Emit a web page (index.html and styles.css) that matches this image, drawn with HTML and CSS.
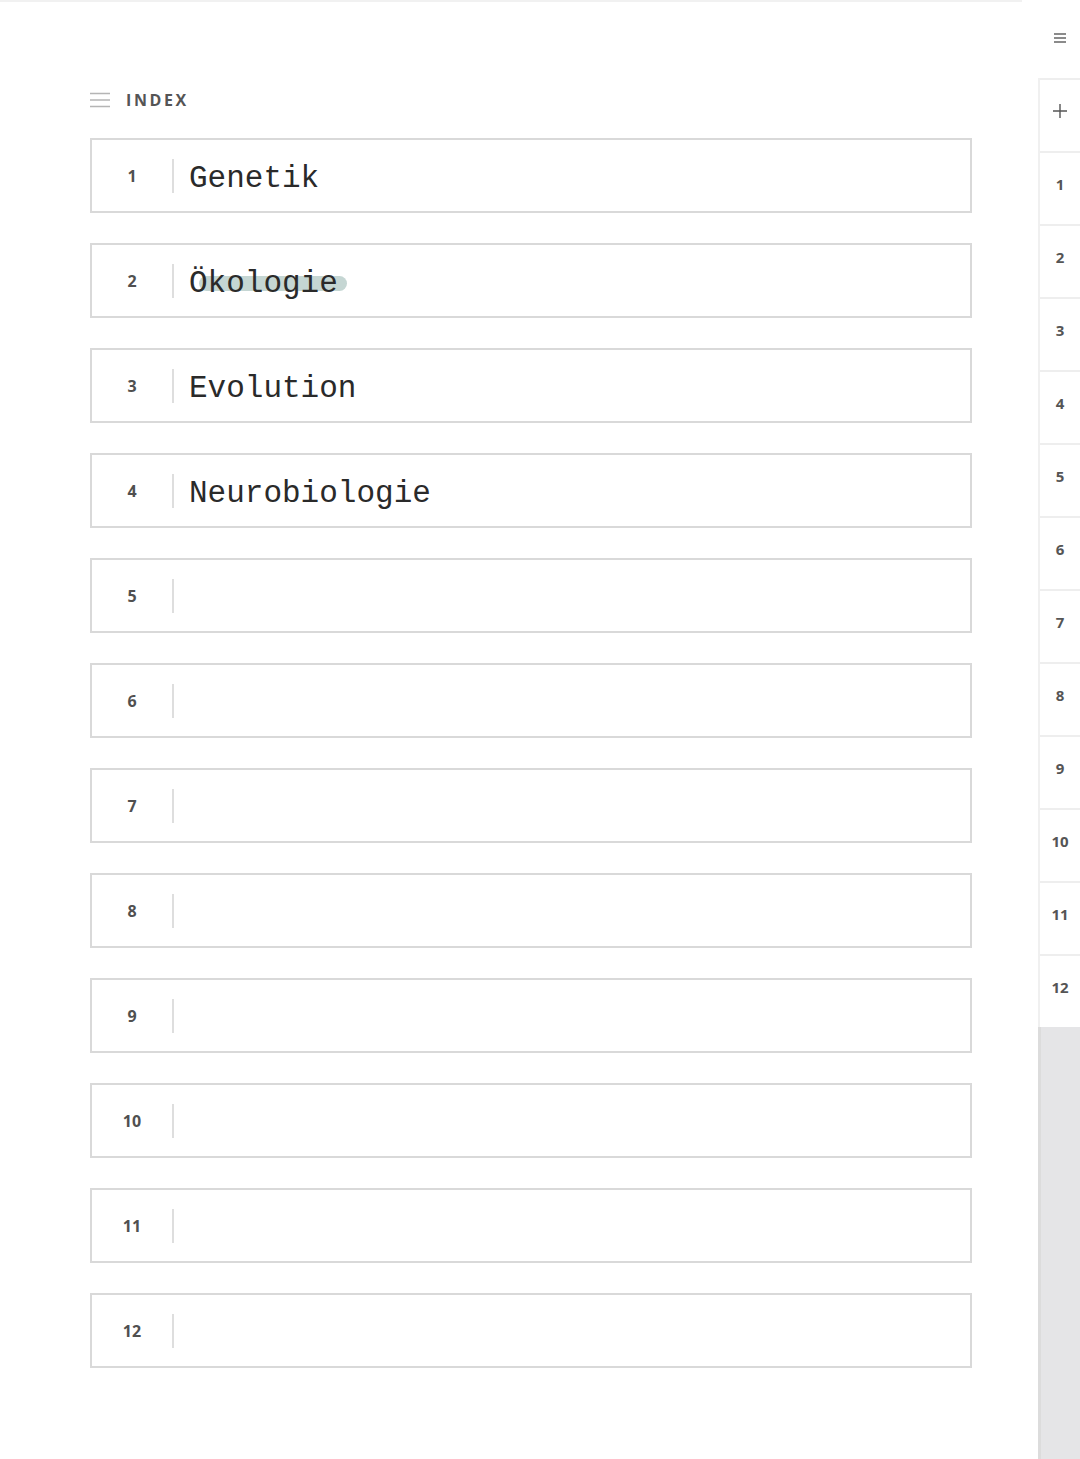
FILE: index.html
```html
<!DOCTYPE html>
<html lang="de">
<head>
<meta charset="utf-8">
<title>Index</title>
<link rel="stylesheet" href="styles.css">
</head>
<body>
<div class="page">
  <main class="main">
    <div class="topline"></div>
    <div class="header">
      <svg class="menu-icon" width="20" height="16" viewBox="0 0 20 16"><path d="M0 1.5h20M0 8h20M0 14.5h20" stroke="#b5b5b5" stroke-width="1.6" fill="none"/></svg>
      <span class="title">INDEX</span>
    </div>
    <ol class="list">
      <li class="row"><span class="num">1</span><span class="sep"></span><span class="text">Genetik</span></li>
      <li class="row"><span class="num">2</span><span class="sep"></span><span class="text"><span class="mark">Ökologie</span></span></li>
      <li class="row"><span class="num">3</span><span class="sep"></span><span class="text">Evolution</span></li>
      <li class="row"><span class="num">4</span><span class="sep"></span><span class="text">Neurobiologie</span></li>
      <li class="row"><span class="num">5</span><span class="sep"></span><span class="text"></span></li>
      <li class="row"><span class="num">6</span><span class="sep"></span><span class="text"></span></li>
      <li class="row"><span class="num">7</span><span class="sep"></span><span class="text"></span></li>
      <li class="row"><span class="num">8</span><span class="sep"></span><span class="text"></span></li>
      <li class="row"><span class="num">9</span><span class="sep"></span><span class="text"></span></li>
      <li class="row"><span class="num">10</span><span class="sep"></span><span class="text"></span></li>
      <li class="row"><span class="num">11</span><span class="sep"></span><span class="text"></span></li>
      <li class="row"><span class="num">12</span><span class="sep"></span><span class="text"></span></li>
    </ol>
  </main>
  <aside class="sidebar">
    <div class="side-menu">
      <svg width="12" height="10" viewBox="0 0 12 10"><path d="M0 1h12M0 5h12M0 9h12" stroke="#666" stroke-width="1.4" fill="none"/></svg>
    </div>
    <div class="tabs">
      <div class="tab plus"><svg width="14" height="14" viewBox="0 0 14 14"><path d="M7 0v14M0 7h14" stroke="#555" stroke-width="1.4" fill="none"/></svg></div>
      <div class="tab">1</div>
      <div class="tab">2</div>
      <div class="tab">3</div>
      <div class="tab">4</div>
      <div class="tab">5</div>
      <div class="tab">6</div>
      <div class="tab">7</div>
      <div class="tab">8</div>
      <div class="tab">9</div>
      <div class="tab">10</div>
      <div class="tab">11</div>
      <div class="tab">12</div>
    </div>
    <div class="side-rest"></div>
  </aside>
</div>
</body>
</html>
```

FILE: styles.css
```css
* { box-sizing: border-box; }
html, body { margin: 0; padding: 0; background: #fff; }
body { font-family: "Open Sans", "Noto Sans", sans-serif; }

.page {
  display: flex;
  width: 1080px;
  height: 1459px;
  overflow: hidden;
}

.main {
  flex: 1;
  display: flex;
  flex-direction: column;
}

.topline {
  width: 1022px;
  height: 2px;
  background: #f1f1f1;
}

.header {
  display: flex;
  align-items: center;
  gap: 16px;
  margin: 81px 0 0 90px;
  height: 34px;
}

.menu-icon { display: block; }

.title {
  font-size: 16px;
  font-weight: 700;
  letter-spacing: 2.6px;
  color: #555;
}

.list {
  list-style: none;
  margin: 21px 0 0 90px;
  padding: 0;
  display: flex;
  flex-direction: column;
  gap: 30px;
}

.row {
  width: 882px;
  height: 75px;
  border: 2px solid #d9d9d9;
  display: flex;
  align-items: center;
}

.num {
  width: 80px;
  text-align: center;
  font-size: 16px;
  font-weight: 700;
  color: #505050;
}

.sep {
  width: 2px;
  height: 34px;
  background: #dedede;
}

.text {
  margin-left: 15px;
  font-family: "Liberation Mono", "Courier New", monospace;
  font-size: 31px;
  color: #2a2a2a;
  line-height: 1;
  padding-top: 6px;
}

.mark {
  position: relative;
  z-index: 0;
}

.mark::before {
  content: "";
  position: absolute;
  left: 10px;
  right: -9px;
  top: 10px;
  height: 15px;
  border-radius: 8px;
  background: #c5d6d3;
  z-index: -1;
}

.sidebar {
  width: 42px;
  display: flex;
  flex-direction: column;
}

.side-menu {
  height: 78px;
  display: flex;
  align-items: center;
  justify-content: center;
  padding-left: 2px;
  padding-bottom: 2px;
}

.tabs {
  display: flex;
  flex-direction: column;
  border-left: 2px solid #f0f0f0;
}

.tab {
  height: 73px;
  border-top: 2px solid #eeeeee;
  display: flex;
  align-items: center;
  justify-content: center;
  padding-bottom: 9px;
  font-size: 15px;
  font-weight: 700;
  color: #555;
  background: #fff;
}

.tab.plus svg { display: block; }

.side-rest {
  flex: 1;
  background: #e5e5e7;
  border-left: 3px solid #dcdcdc;
}
```
